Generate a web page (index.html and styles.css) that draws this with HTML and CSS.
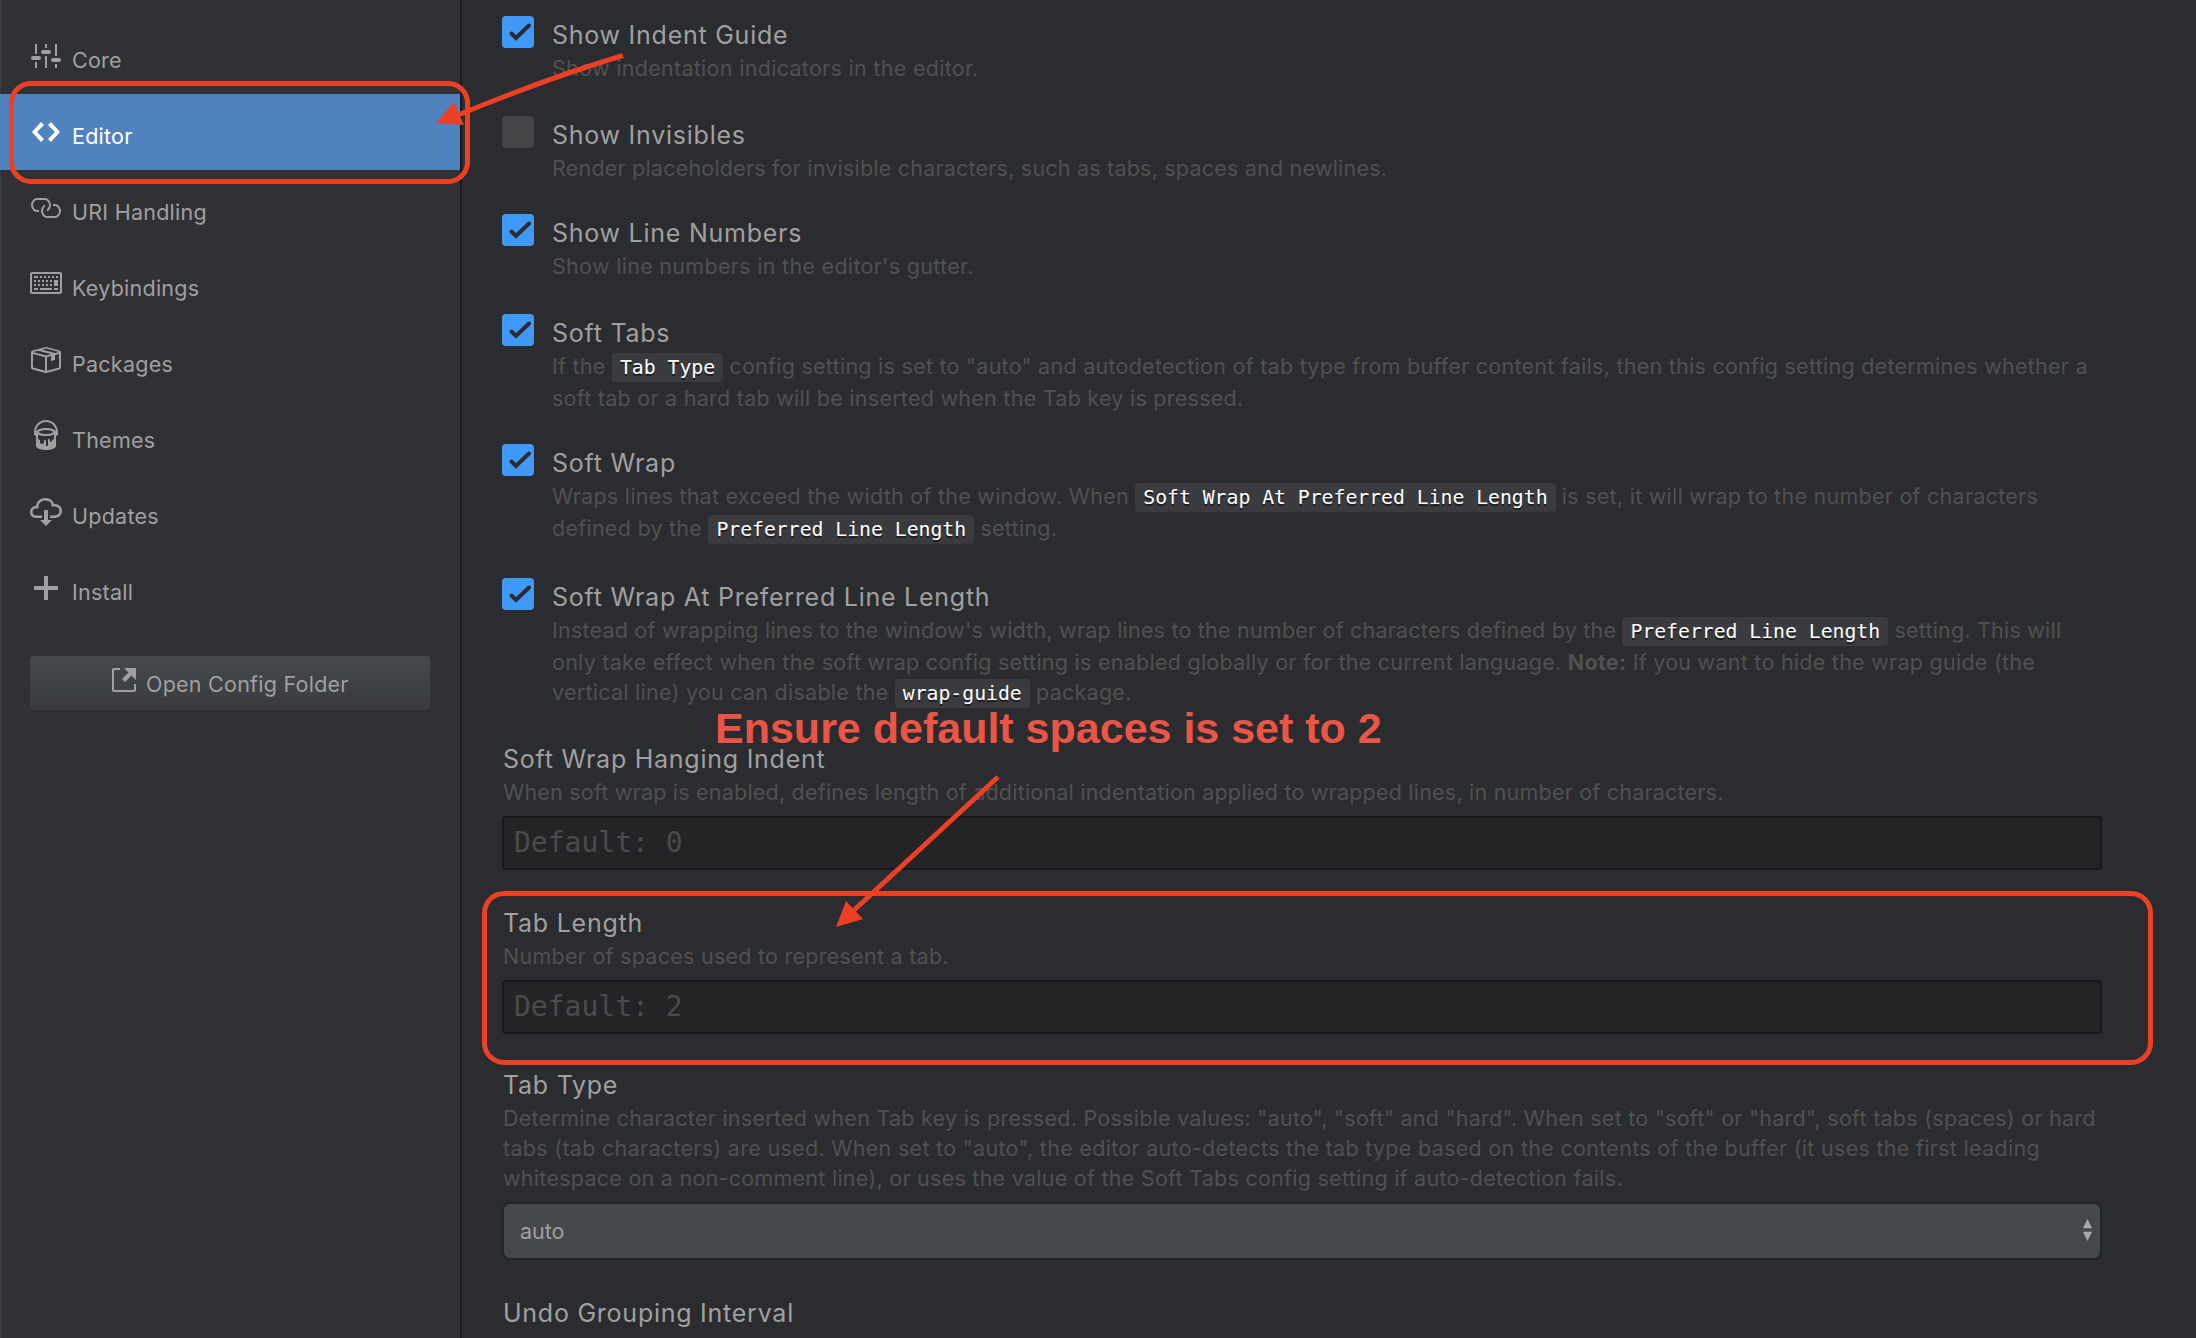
FILE: index.html
```html
<!DOCTYPE html>
<html lang="en">
<head>
<meta charset="utf-8">
<title>Settings</title>
<link rel="stylesheet" href="styles.css">
</head>
<body>
<div class="window">
  <aside class="sidebar">
    <nav class="menu">
      <a class="item"><svg class="icon" viewBox="0.500 0 16 16"><path d="M3 2h1v5H3zM3 11h1v3H3zM8 2h1v2H8zM8 8h1v6H8zM13 2h1v6h-1zM13 12h1v2h-1z"/><rect x="1" y="8" width="5" height="2" rx="1"/><rect x="6" y="5" width="5" height="2" rx="1"/><rect x="11" y="9" width="5" height="2" rx="1"/></svg><span>Core</span></a>
      <a class="item selected"><svg class="icon" viewBox="-1 0 16 16"><path d="M9.500 3L8 4.500 11.500 8 8 11.500 9.500 13 14 8 9.500 3zm-5 0L0 8l4.500 5L6 11.500 2.500 8 6 4.500 4.500 3z"/></svg><span>Editor</span></a>
      <a class="item"><svg class="icon" viewBox="0.500 0 16 16"><path d="M4 9h1v1H4c-1.500 0-3-1.690-3-3.500S2.550 3 4 3h4c1.450 0 3 1.690 3 3.500 0 1.410-.91 2.720-2 3.250V8.590c.58-.45 1-1.270 1-2.090C10 5.220 8.980 4 8 4H4c-.98 0-2 1.220-2 2.500S3 9 4 9zm9-3h-1v1h1c1 0 2 1.220 2 2.500S13.980 12 13 12H9c-.98 0-2-1.220-2-2.500 0-.83.42-1.640 1-2.090V6.250c-1.090.53-2 1.840-2 3.250C6 11.310 7.550 13 9 13h4c1.450 0 3-1.690 3-3.500S14.500 6 13 6z"/></svg><span>URI Handling</span></a>
      <a class="item"><svg class="icon" viewBox="0 0 16 16"><path d="M10 5H9V4h1v1zM3 6H2v1h1V6zm5-2H7v1h1V4zM4 4H2v1h2V4zm8 7h2v-1h-2v1zM8 7h1V6H8v1zm-4 3H2v1h2v-1zm8-6h-1v1h1V4zm2 0h-1v1h1V4zm-2 5h2V6h-2v3zm4-6v9c0 .55-.45 1-1 1H1c-.55 0-1-.45-1-1V3c0-.55.45-1 1-1h14c.55 0 1 .45 1 1zm-1 0H1v9h14V3zM6 7h1V6H6v1zm0-3H5v1h1V4zM4 7h1V6H4v1zm1 4h6v-1H5v1zm5-4h1V6h-1v1zM3 8H2v1h1V8zm5 0v1h1V8H8zM6 8v1h1V8H6zM5 8H4v1h1V8zm5 1h1V8h-1v1z"/></svg><span>Keybindings</span></a>
      <a class="item"><svg class="icon" viewBox="0.500 0 16 16"><path d="M1 4.270v7.470c0 .45.3.84.75.97l6.500 1.730c.16.05.34.05.5 0l6.500-1.730c.45-.13.75-.52.75-.97V4.270c0-.45-.3-.84-.75-.97l-6.500-1.740a1.400 1.400 0 0 0-.5 0L1.750 3.300c-.45.13-.75.52-.75.97zm7 9.090l-6-1.590V5l6 1.610v6.750zM2 4l2.500-.67L11 5.060l-2.500.67L2 4zm13 7.770l-6 1.590V6.610l2-.55V8.500l2-.53V5.530L15 5v6.770zm-2-7.240L6.500 2.800l2-.53L15 4l-2 .53z"/></svg><span>Packages</span></a>
      <a class="item"><svg class="icon" viewBox="-2 0 16 16"><path d="M6 0C2.690 0 0 2.690 0 6v1c0 .55.45 1 1 1v5c0 1.100 2.240 2 5 2s5-.9 5-2V8c.55 0 1-.45 1-1V6c0-3.310-2.690-6-6-6zm3 10v.5c0 .28-.22.5-.5.5s-.5-.22-.5-.5V10c0-.28-.22-.5-.5-.5s-.5.22-.5.5v2.500c0 .28-.22.5-.5.5s-.5-.22-.5-.5v-2c0-.28-.22-.5-.5-.5s-.5.22-.5.5v.5c0 .55-.45 1-1 1s-1-.45-1-1v-1c-.55 0-1-.45-1-1V7.200c.91.49 2.360.8 4 .8 1.640 0 3.090-.31 4-.8V9c0 .55-.45 1-1 1zM6 7c-1.680 0-3.120-.41-3.710-1C2.880 5.410 4.320 5 6 5c1.680 0 3.120.41 3.710 1-.59.59-2.030 1-3.710 1zm0-3c-2.760 0-5 .89-5 2 0-2.760 2.240-5 5-5s5 2.240 5 5c0-1.100-2.240-2-5-2z"/></svg><span>Themes</span></a>
      <a class="item"><svg class="icon" viewBox="0 0 16 16"><path d="M9 12h2l-3 3-3-3h2V7h2v5zm3-8c0-.44-.91-3-4.500-3C5.080 1 3 2.920 3 5 1.020 5 0 6.520 0 8c0 1.530 1 3 3 3h3V9.700H3C1.380 9.700 1.300 8.280 1.300 8c0-.17.05-1.700 1.700-1.700h1.300V5c0-1.390 1.560-2.700 3.200-2.700 2.550 0 3.130 1.550 3.200 1.800v1.200H12c.81 0 2.700.22 2.700 2.200 0 2.090-2.250 2.200-2.700 2.200h-2V11h2c2.080 0 4-1.160 4-3.500C16 5.060 14.080 4 12 4z"/></svg><span>Updates</span></a>
      <a class="item"><svg class="icon" viewBox="0 0 16 16"><path d="M7 2h2v5h5v2H9v5H7V9H2V7h5z"/></svg><span>Install</span></a>
    </nav>
    <button class="config"><svg class="icon" viewBox="0 0 16 16"><path d="M11 10h1v3c0 .55-.45 1-1 1H1c-.55 0-1-.45-1-1V3c0-.55.45-1 1-1h3v1H1v10h10v-3zM6 2l2.250 2.250L5 7.500 6.500 9l3.250-3.250L12 8V2H6z"/></svg><span>Open Config Folder</span></button>
  </aside>

  <main class="panel">
    <section class="setting check">
      <svg class="box on" viewBox="0 0 32 32"><path d="M9.500 17.500L14 22 27 9.500"/></svg>
      <div><h3>Show Indent Guide</h3><p><span class="line loose">Show indentation indicators in the editor.</span></p></div>
    </section>
    <section class="setting check tight">
      <span class="box"></span>
      <div><h3>Show Invisibles</h3><p><span class="line close">Render placeholders for invisible characters, such as tabs, spaces and newlines.</span></p></div>
    </section>
    <section class="setting check">
      <svg class="box on" viewBox="0 0 32 32"><path d="M9.500 17.500L14 22 27 9.500"/></svg>
      <div><h3>Show Line Numbers</h3><p><span class="line loose">Show line numbers in the editor's gutter.</span></p></div>
    </section>
    <section class="setting check tight">
      <svg class="box on" viewBox="0 0 32 32"><path d="M9.500 17.500L14 22 27 9.500"/></svg>
      <div><h3>Soft Tabs</h3><p><span class="line coded">If the <code>Tab Type</code> config setting is set to "auto" and autodetection of tab type from buffer content fails, then this config setting determines whether a</span><span class="line">soft tab or a hard tab will be inserted when the Tab key is pressed.</span></p></div>
    </section>
    <section class="setting check">
      <svg class="box on" viewBox="0 0 32 32"><path d="M9.500 17.500L14 22 27 9.500"/></svg>
      <div><h3>Soft Wrap</h3><p><span class="line coded">Wraps lines that exceed the width of the window. When <code>Soft Wrap At Preferred Line Length</code> is set, it will wrap to the number of characters</span><span class="line coded">defined by the <code>Preferred Line Length</code> setting.</span></p></div>
    </section>
    <section class="setting check tight">
      <svg class="box on" viewBox="0 0 32 32"><path d="M9.500 17.500L14 22 27 9.500"/></svg>
      <div><h3>Soft Wrap At Preferred Line Length</h3><p><span class="line coded close">Instead of wrapping lines to the window's width, wrap lines to the number of characters defined by the <code>Preferred Line Length</code> setting. This will</span><span class="line">only take effect when the soft wrap config setting is enabled globally or for the current language. <strong>Note:</strong> If you want to hide the wrap guide (the</span><span class="line coded">vertical line) you can disable the <code>wrap-guide</code> package.</span></p></div>
    </section>
    <section class="setting field">
      <h3>Soft Wrap Hanging Indent</h3>
      <p><span class="line close">When soft wrap is enabled, defines length of additional indentation applied to wrapped lines, in number of characters.</span></p>
      <div class="input">Default: 0</div>
    </section>
    <section class="setting field tight">
      <h3>Tab Length</h3>
      <p><span class="line">Number of spaces used to represent a tab.</span></p>
      <div class="input">Default: 2</div>
    </section>
    <section class="setting field">
      <h3>Tab Type</h3>
      <p><span class="line">Determine character inserted when Tab key is pressed. Possible values: "auto", "soft" and "hard". When set to "soft" or "hard", soft tabs (spaces) or hard</span><span class="line loose">tabs (tab characters) are used. When set to "auto", the editor auto-detects the tab type based on the contents of the buffer (it uses the first leading</span><span class="line">whitespace on a non-comment line), or uses the value of the Soft Tabs config setting if auto-detection fails.</span></p>
      <div class="select"><span>auto</span><svg class="arrows" viewBox="0 0 10 24"><path d="M5 0l5 10H0zM5 24l5-10H0z"/></svg></div>
    </section>
    <section class="setting field">
      <h3>Undo Grouping Interval</h3>
    </section>
  </main>

  <div class="mark mark-editor"></div>
  <div class="mark mark-tab"></div>
  <svg class="pointers" viewBox="0 0 2196 1338">
    <path class="shaft" d="M623 55.500Q548 78 458 115"/>
    <path class="head" d="M436 123L454 102 464 125z"/>
    <path class="shaft" d="M998 777L852 912"/>
    <path class="head" d="M836 927L846 901 863 919z"/>
  </svg>
  <div class="note">Ensure default spaces is set to 2</div>
</div>
</body>
</html>
```
FILE: styles.css
```css
* { box-sizing: border-box; }
body { margin: 0; background: #2b2c30; }
h3, p { margin: 0; font-weight: 400; }

.window {
  position: relative;
  display: flex;
  width: 2196px;
  height: 1338px;
  overflow: hidden;
  font-family: Inter, "Liberation Sans", sans-serif;
  font-size: 21.5px;
  line-height: 30px;
  color: #a0a0a0;
  background: #2b2c30;
}

.sidebar {
  flex: none;
  width: 462px;
  padding-top: 18px;
  background: #303135;
  border-right: 2px solid #1b1b1e;
  box-shadow: inset 1px 0 #3d3e42;
}
.item {
  display: flex;
  height: 76px;
  padding: 22px 0 0 30px;
  gap: 10px;
}
.item span { padding-top: 5px; letter-spacing: 0.25px; }
.item.selected { color: #fff; background: #5082be; }
.icon { flex: none; width: 32px; height: 32px; fill: currentColor; }
.config {
  display: flex;
  width: 400px;
  height: 54px;
  margin: 30px 0 0 30px;
  padding: 8px 0 0 82px;
  gap: 2px;
  border: 0;
  border-radius: 4px;
  font: inherit;
  color: inherit;
  background: linear-gradient(#45484c, #393b3f);
}
.config span { padding-top: 5px; letter-spacing: 0.24px; }

.panel {
  flex: 1;
  padding: 19px 94px 0 40px;
  overflow: hidden;
}
.setting { margin-bottom: 36px; }
.setting.tight { margin-bottom: 34px; }
.setting.field { margin-bottom: 37px; }
.setting.field.tight { margin-bottom: 35px; }
.setting:last-child { margin-bottom: 0; }
.check { display: flex; gap: 18px; }
.field { padding-left: 1px; }
h3 { font-size: 25px; line-height: 32px; letter-spacing: 0.75px; white-space: nowrap; }
p { margin-top: 2px; color: #515151; }
.line { display: block; height: 30px; white-space: nowrap; letter-spacing: 0.26px; }
.line.coded { height: 32px; }
.line.close { letter-spacing: 0.21px; }
.line.loose { letter-spacing: 0.3px; }
code {
  padding: 3px 8px;
  border-radius: 4px;
  font-family: "DejaVu Sans Mono", monospace;
  font-size: 19.8px;
  line-height: 20px;
  letter-spacing: -0.02px;
  color: #fff;
  background: #3a3b3f;
  text-shadow: 0 2px #1b1b1e;
}

.box {
  flex: none;
  width: 32px;
  height: 32px;
  margin-top: -3px;
  border-radius: 4px;
  background: #444547;
}
.box.on { background: #4098f8; }
.box path { fill: none; stroke: #2b2c30; stroke-width: 4; stroke-linecap: round; }

.input, .select {
  width: 1600px;
  margin: 9px 0 0 -1px;
}
.input {
  height: 54px;
  padding: 0 10px;
  border: 2px solid #18181b;
  border-radius: 4px;
  font: 28px/49px "DejaVu Sans Mono", monospace;
  color: #4a4b4c;
  background: #242426;
}
.select {
  display: flex;
  justify-content: space-between;
  align-items: center;
  height: 58px;
  padding: 0 7px 0 16px;
  border: 2px solid #232427;
  border-radius: 8px;
  background: #44474b;
}
.arrows { width: 11px; height: 22px; margin-top: -2px; fill: #a9a9aa; }

.mark {
  position: absolute;
  border: 5px solid #eb4026;
  border-radius: 22px;
}
.mark-editor { left: 9px; top: 81px; width: 461px; height: 103px; }
.mark-tab { left: 482px; top: 891px; width: 1671px; height: 174px; }
.pointers { position: absolute; left: 0; top: 0; width: 2196px; height: 1338px; }
.shaft { fill: none; stroke: #eb4026; stroke-width: 5; }
.head { fill: #eb4026; }
.note {
  position: absolute;
  left: 715px;
  top: 704px;
  font: bold 43px/48px "Liberation Sans", sans-serif;
  white-space: nowrap;
  color: #eb5545;
}
```
